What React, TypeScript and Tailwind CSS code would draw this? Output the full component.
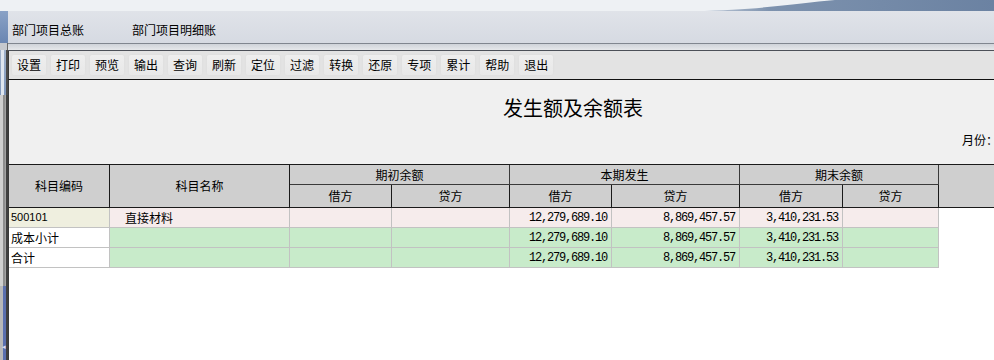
import React from "react";

const tools = ["设置", "打印", "预览", "输出", "查询", "刷新", "定位", "过滤", "转换", "还原", "专项", "累计", "帮助", "退出"];

type Row = { code: string; name: string; b1: string; b2: string; c1: string; c2: string; e1: string; e2: string; kind: "pink" | "green" };

const rows: Row[] = [
  { code: "500101", name: "直接材料", b1: "", b2: "", c1: "12,279,689.10", c2: "8,869,457.57", e1: "3,410,231.53", e2: "", kind: "pink" },
  { code: "成本小计", name: "", b1: "", b2: "", c1: "12,279,689.10", c2: "8,869,457.57", e1: "3,410,231.53", e2: "", kind: "green" },
  { code: "合计", name: "", b1: "", b2: "", c1: "12,279,689.10", c2: "8,869,457.57", e1: "3,410,231.53", e2: "", kind: "green" },
];

const cjk = { fontFamily: '"Noto Sans CJK SC", "Liberation Sans", sans-serif' };
const mono = { fontFamily: '"Liberation Mono", "DejaVu Sans Mono", monospace' };

function Num({ v, bg }: { v: string; bg: string }) {
  return (
    <div className={`h-[20px] border-r border-b border-[#c2c2c2] ${bg} flex items-center justify-end pr-[4px] text-[12px] tracking-[-1.2px] text-black`} style={mono}>
      {v}
    </div>
  );
}

export default function App() {
  return (
    <div className="w-[994px] h-[360px] overflow-hidden bg-[#f0f0f0] flex flex-col text-black" style={cjk}>
      {/* top strip */}
      <div className="h-[11px] w-full bg-[#eef1f4] shrink-0">
        <svg width="994" height="11" viewBox="0 0 994 11" className="block">
          <defs>
            <linearGradient id="sw" x1="0" y1="0" x2="1" y2="0">
              <stop offset="0" stopColor="#c9d2de" />
              <stop offset="0.25" stopColor="#7d92ae" />
              <stop offset="1" stopColor="#6b82a2" />
            </linearGradient>
          </defs>
          <path d="M695,11 C760,10 800,3 835,0 L994,0 L994,11 Z" fill="url(#sw)" />
        </svg>
      </div>
      <div className="flex flex-1 min-h-0">
        {/* left sidebar */}
        <div className="w-[8px] shrink-0 flex flex-col">
          <div className="h-[32px] bg-gradient-to-b from-[#8aa2c6] to-[#6a86b2]" />
          <div className="h-[7px] bg-[#c6c9ce] border-r border-[#6a6a6a]" />
          <div className="h-[45px] bg-gradient-to-b from-[#9fb1cb] to-[#7e96bb] border-r-2 border-[#4a4a4a] flex">
            <div className="w-[3px] ml-[1px] bg-[#dfe6ef]" />
          </div>
          <div className="h-[191px] bg-[#a3a3a3] border-r-2 border-[#3f3f3f] flex">
            <div className="w-[3px] bg-[#d0d0d0]" />
            <div className="w-[2px] bg-[#8e8e8e]" />
          </div>
          <div className="flex-1 bg-[#a9a9a9] border-r-2 border-[#3f3f3f] flex">
            <div className="w-[3px] bg-[#b8b8b8]" />
            <div className="w-[3px] bg-[#5a6fae] flex flex-col justify-end pb-[10px]">
              <div className="text-[7px] leading-none text-[#dde] -ml-[1px]">◂</div>
            </div>
          </div>
        </div>

        {/* main */}
        <div className="flex-1 min-w-0 flex flex-col">
          {/* tab bar */}
          <div className="h-[32px] bg-gradient-to-b from-[#e0e3e9] to-[#d6dae2] flex items-end pb-[6px] text-[12px] leading-[14px]">
            <span className="ml-[4px] whitespace-nowrap">部门项目总账</span>
            <span className="ml-[48px] whitespace-nowrap">部门项目明细账</span>
          </div>
          <div className="h-[1px] bg-[#80868f]" />
          <div className="h-[6px] bg-gradient-to-b from-[#cfd3d9] to-[#e6e8eb]" />
          <div className="h-[1px] bg-[#4c5058]" />
          {/* toolbar */}
          <div className="h-[29px] bg-[#e3e3e3] border-l border-[#3a3a3a] border-b border-b-[#111] flex items-center pl-[3px] gap-[5px]">
            {tools.map((t) => (
              <div key={t} className="h-[20px] px-[5px] flex items-center text-[12px] leading-none rounded-[2px] bg-gradient-to-b from-[#eeeeee] to-[#e8e8e8] shadow-[0_0_2px_#dadada] whitespace-nowrap">
                {t}
              </div>
            ))}
          </div>

          {/* content */}
          <div className="flex-1 min-h-0 flex flex-col border-l border-[#3a3a3a]">
            <div className="h-[84px] shrink-0 bg-[#f0f0f0] relative">
              <div className="pt-[16px] pl-[494px] text-[20px] leading-[24px] whitespace-nowrap">发生额及余额表</div>
              <div className="pt-[12px] pl-[953px] text-[12px] leading-[16px] whitespace-nowrap">月份：</div>
            </div>
            <div className="flex-1 bg-white">
              {/* header */}
              <div className="grid grid-cols-[101px_180px_102px_118px_102px_128px_103px_96px_1fr] grid-rows-[20px_23px] border-t border-[#1a1a1a] bg-[#cfcfcf] text-[12px] leading-none">
                <div className="row-span-2 border-r border-b border-[#1a1a1a] flex items-center justify-center">科目编码</div>
                <div className="row-span-2 border-r border-b border-[#1a1a1a] flex items-center justify-center">科目名称</div>
                <div className="col-span-2 border-r border-b border-[#3a3a3a] flex items-center justify-center">期初余额</div>
                <div className="col-span-2 border-r border-b border-[#3a3a3a] flex items-center justify-center">本期发生</div>
                <div className="col-span-2 border-r border-b border-[#3a3a3a] flex items-center justify-center">期末余额</div>
                <div className="row-span-2 border-b border-[#1a1a1a]" />
                <div className="border-r border-b border-[#1a1a1a] flex items-center justify-center">借方</div>
                <div className="border-r border-b border-[#1a1a1a] flex items-center justify-center">贷方</div>
                <div className="border-r border-b border-[#1a1a1a] flex items-center justify-center">借方</div>
                <div className="border-r border-b border-[#1a1a1a] flex items-center justify-center">贷方</div>
                <div className="border-r border-b border-[#1a1a1a] flex items-center justify-center">借方</div>
                <div className="border-r border-b border-[#1a1a1a] flex items-center justify-center">贷方</div>
              </div>
              {/* rows */}
              {rows.map((r, i) => {
                const bg = r.kind === "pink" ? "bg-[#f6ecec]" : "bg-[#c8ebca]";
                const codeBg = r.kind === "pink" ? "bg-[#efefdf]" : "bg-white";
                return (
                  <div key={i} className="grid grid-cols-[101px_180px_102px_118px_102px_128px_103px_96px_1fr]">
                    <div className={`h-[20px] border-r border-b border-[#c2c2c2] ${codeBg} flex items-center pl-[2px] ${r.kind === "pink" ? "text-[11px]" : "text-[12px]"}`} style={r.kind === "pink" ? { fontFamily: '"Liberation Sans", sans-serif' } : undefined}>
                      {r.code}
                    </div>
                    <div className={`h-[20px] border-r border-b border-[#c2c2c2] ${bg} flex items-center pl-[15px] text-[12px]`}>{r.name}</div>
                    <Num v={r.b1} bg={bg} />
                    <Num v={r.b2} bg={bg} />
                    <Num v={r.c1} bg={bg} />
                    <Num v={r.c2} bg={bg} />
                    <Num v={r.e1} bg={bg} />
                    <Num v={r.e2} bg={bg} />
                    <div className="bg-white" />
                  </div>
                );
              })}
            </div>
          </div>
        </div>
      </div>
    </div>
  );
}
